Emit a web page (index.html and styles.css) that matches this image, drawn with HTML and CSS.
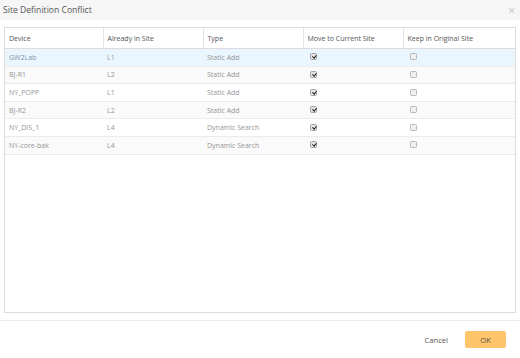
FILE: index.html
```html
<!DOCTYPE html>
<html>
<head>
<meta charset="utf-8">
<link rel="stylesheet" href="styles.css">
</head>
<body>
<div class="modal">
  <div class="modal-header">
    <span class="title">Site Definition Conflict</span>
    <span class="close">&#x2715;</span>
  </div>
  <div class="modal-body">
    <div class="grid">
      <table>
        <colgroup>
          <col class="c1"><col class="c2"><col class="c3"><col class="c4"><col>
        </colgroup>
        <thead>
          <tr><th>Device</th><th>Already in Site</th><th>Type</th><th>Move to Current Site</th><th>Keep in Original Site</th></tr>
        </thead>
        <tbody>
          <tr class="sel"><td class="dev">GW2Lab</td><td>L1</td><td>Static Add</td><td><span class="cb on"></span></td><td><span class="cb"></span></td></tr>
          <tr class="alt"><td>BJ-R1</td><td>L2</td><td>Static Add</td><td><span class="cb on"></span></td><td><span class="cb"></span></td></tr>
          <tr><td>NY_POPP</td><td>L1</td><td>Static Add</td><td><span class="cb on"></span></td><td><span class="cb"></span></td></tr>
          <tr class="alt"><td>BJ-R2</td><td>L2</td><td>Static Add</td><td><span class="cb on"></span></td><td><span class="cb"></span></td></tr>
          <tr><td>NY_DIS_1</td><td>L4</td><td>Dynamic Search</td><td><span class="cb on"></span></td><td><span class="cb"></span></td></tr>
          <tr class="alt"><td>NY-core-bak</td><td>L4</td><td>Dynamic Search</td><td><span class="cb on"></span></td><td><span class="cb"></span></td></tr>
        </tbody>
      </table>
    </div>
  </div>
  <div class="modal-footer">
    <button class="btn-cancel">Cancel</button>
    <button class="btn-ok">OK</button>
  </div>
</div>
</body>
</html>
```

FILE: styles.css
```css
html, body {
  margin: 0;
  padding: 0;
  background: #fff;
}
body {
  font-family: "Open Sans", "Liberation Sans", sans-serif;
  width: 520px;
  height: 358px;
  overflow: hidden;
}
.modal {
  display: flex;
  flex-direction: column;
  height: 358px;
}
.modal-header {
  height: 20px;
  background: #f6f6f6;
  display: flex;
  align-items: center;
  justify-content: space-between;
  padding: 0 4px 0 3px;
}
.title {
  font-size: 8.6px;
  color: #555;
  line-height: 1;
}
.close {
  font-size: 9px;
  color: #c8c8c8;
  line-height: 1;
}
.modal-body {
  padding: 7px 4px 7px 4px;
}
.grid {
  border: 1px solid #dcdcdc;
  height: 284px;
  overflow: hidden;
}
table {
  width: 100%;
  border-collapse: collapse;
  table-layout: fixed;
  font-size: 7px;
}
.c1 { width: 98px; }
.c2 { width: 100px; }
.c3 { width: 100px; }
.c4 { width: 100px; }
th {
  text-align: left;
  font-weight: normal;
  color: #555;
  height: 20px;
  padding: 0 4px;
  border-bottom: 1px solid #dcdcdc;
  border-right: 1px solid #e2e2e2;
}
th:last-child { border-right: none; }
th:first-child, td:first-child { padding-left: 4px; }
td {
  color: #959595;
  height: 16.6px;
  padding: 0 4px;
  border-bottom: 1px solid #ebebeb;
  white-space: nowrap;
}
tr.alt td { background: #fafafa; }
tr.sel td { background: #eaf6fd; }
tr.sel td.dev { color: #7a97ab; }
.cb {
  display: inline-block;
  width: 5px;
  height: 5px;
  border: 1px solid #b8b8b8;
  border-radius: 1.5px;
  background: #f0f0f0;
  position: relative;
  vertical-align: middle;
  margin-top: -2px;
  margin-left: 3px;
}
.cb.on {
  background: #e2e2e2;
  border-color: #a5a5a5;
}
.cb.on::after {
  content: "";
  position: absolute;
  left: 1.5px;
  top: 0px;
  width: 1.5px;
  height: 3px;
  border: solid #222;
  border-width: 0 1.2px 1.2px 0;
  transform: rotate(40deg);
}
.modal-footer {
  border-top: 1px solid #eaeaea;
  flex: 1;
  display: flex;
  align-items: center;
  justify-content: flex-end;
  padding: 0 14px 0 0;
  gap: 17px;
}
.btn-cancel {
  border: none;
  background: none;
  font-family: inherit;
  font-size: 7.6px;
  color: #555;
  padding: 0;
}
.btn-ok {
  border: none;
  background: #ffc56a;
  border-radius: 2px;
  font-family: inherit;
  font-size: 7.6px;
  color: #555;
  width: 41px;
  height: 17px;
  padding: 0;
}
```
